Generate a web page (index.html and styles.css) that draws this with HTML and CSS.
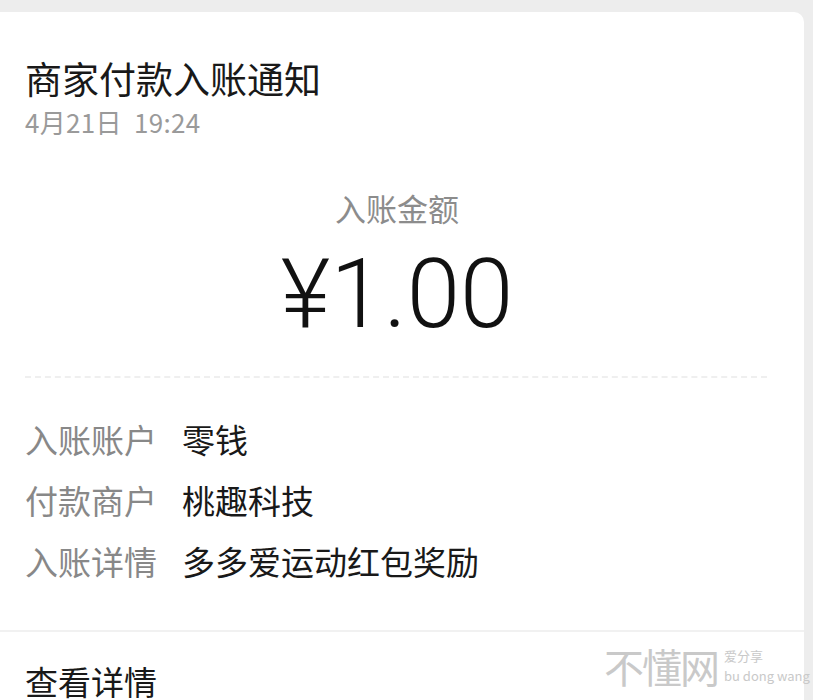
FILE: index.html
```html
<!DOCTYPE html>
<html lang="zh-CN">
<head>
  <meta charset="UTF-8" />
  <title>商家付款入账通知</title>
  <link rel="stylesheet" href="styles.css">
</head>
<body>
  <div class="card">
    <div class="head">
      <h1 class="title">商家付款入账通知</h1>
      <div class="date">4月21日&nbsp;&nbsp;19:24</div>
    </div>

    <div class="money">
      <div class="money-label">入账金额</div>
      <div class="money-value">¥1.00</div>
    </div>

    <div class="dash"></div>

    <div class="rows">
      <div class="row"><span class="key">入账账户</span><span class="val">零钱</span></div>
      <div class="row"><span class="key">付款商户</span><span class="val">桃趣科技</span></div>
      <div class="row"><span class="key">入账详情</span><span class="val">多多爱运动红包奖励</span></div>
    </div>

    <div class="more">查看详情</div>
  </div>

  <div class="watermark">
    <span class="wm-big">不懂网</span>
    <span class="wm-small">
      <span>爱分享</span>
      <span>bu dong wang</span>
    </span>
  </div>
</body>
</html>
```

FILE: styles.css
```css
body {
  margin: 0;
  background-color: #ededed;
  font-family: "Noto Sans CJK SC", "Noto Sans", sans-serif;
  color: #191919;
  height: 700px;
  overflow: hidden;
}
.card {
  margin: 12px 9px 0 0;
  background: #fff;
  border-top-right-radius: 10px;
  height: 688px;
}
.head { padding: 41px 25px 0; }
.title {
  margin: 0;
  font-size: 37px;
  font-weight: normal;
  line-height: 50px;
}
.date {
  margin-top: 3px;
  font-size: 26px;
  line-height: 32px;
  color: #9a9a9a;
  letter-spacing: 0.3px;
}
.money {
  margin-top: 52px;
  padding-right: 10px;
  text-align: center;
}
.money-label {
  font-size: 31px;
  line-height: 36px;
  color: #8c8c8c;
}
.money-value {
  margin-top: 20px;
  font-family: Roboto, "Noto Sans", sans-serif;
  font-weight: 300;
  font-size: 96px;
  line-height: 96px;
  color: #111;
}
.dash {
  margin: 34px 37px 0 25px;
  border-top: 2px dashed #efefef;
}
.rows {
  padding: 31px 25px 38px;
  border-bottom: 2px solid #f1f1f1;
}
.row {
  display: flex;
  font-size: 33px;
  line-height: 61px;
}
.key {
  width: 157px;
  color: #888;
}
.val { color: #191919; }
.more {
  padding: 24px 25px 0;
  font-size: 33px;
  line-height: 50px;
}
.watermark {
  position: absolute;
  left: 604px;
  top: 642px;
  display: flex;
  align-items: center;
  gap: 6px;
  color: #c9c9c9;
}
.wm-big {
  font-size: 40px;
  line-height: 48px;
  letter-spacing: -2px;
}
.wm-small {
  display: flex;
  flex-direction: column;
  gap: 6px;
  font-size: 13px;
  line-height: 14px;
}
```
